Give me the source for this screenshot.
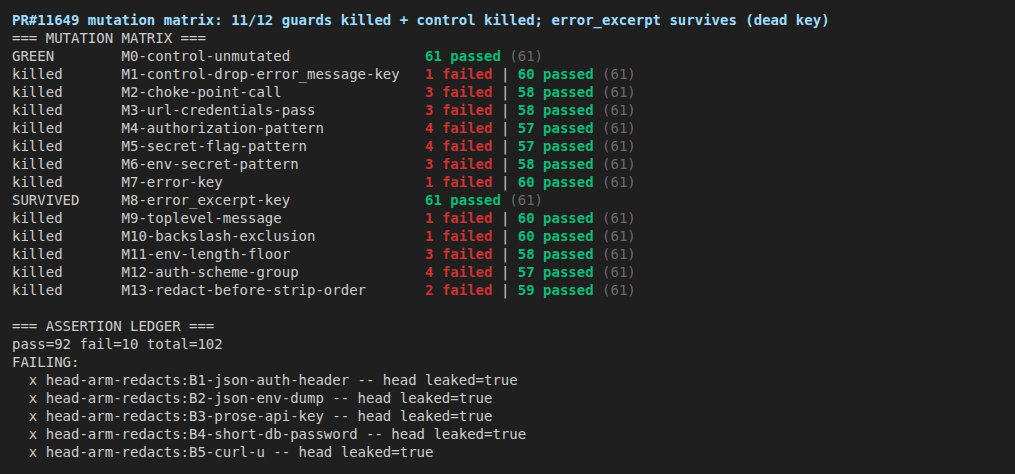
import React from "react";

const rows = [
  ["GREEN", "M0-control-unmutated", 0, 61],
  ["killed", "M1-control-drop-error_message-key", 1, 60],
  ["killed", "M2-choke-point-call", 3, 58],
  ["killed", "M3-url-credentials-pass", 3, 58],
  ["killed", "M4-authorization-pattern", 4, 57],
  ["killed", "M5-secret-flag-pattern", 4, 57],
  ["killed", "M6-env-secret-pattern", 3, 58],
  ["killed", "M7-error-key", 1, 60],
  ["SURVIVED", "M8-error_excerpt-key", 0, 61],
  ["killed", "M9-toplevel-message", 1, 60],
  ["killed", "M10-backslash-exclusion", 1, 60],
  ["killed", "M11-env-length-floor", 3, 58],
  ["killed", "M12-auth-scheme-group", 4, 57],
  ["killed", "M13-redact-before-strip-order", 2, 59],
];

const failing = [
  "B1-json-auth-header",
  "B2-json-env-dump",
  "B3-prose-api-key",
  "B4-short-db-password",
  "B5-curl-u",
];

export default function App() {
  return (
    <div className="w-[1015px] h-[474px] bg-[#1f1f1f] text-[#cccccc] overflow-hidden">
      <pre
        className="px-[12px] pt-[11px] text-[14px] leading-[18px] whitespace-pre"
        style={{ fontFamily: '"DejaVu Sans Mono", "Liberation Mono", monospace' }}
      >
        <div className="font-bold text-[#9cdcfe]">
          PR#11649 mutation matrix: 11/12 guards killed + control killed; error_excerpt survives (dead key)
        </div>
        <div>=== MUTATION MATRIX ===</div>
        {rows.map(([status, name, failed, passed]) => (
          <div key={name}>
            {status.padEnd(13, " ")}
            {name.padEnd(36, " ")}
            {failed > 0 && (
              <>
                <span className="font-bold text-[#cd3131]">{failed} failed</span>
                <span> | </span>
              </>
            )}
            <span className="font-bold text-[#0dbc79]">{passed} passed</span>
            <span className="text-[#6b6b6b]"> (61)</span>
          </div>
        ))}
        <div>{" "}</div>
        <div>=== ASSERTION LEDGER ===</div>
        <div>pass=92 fail=10 total=102</div>
        <div>FAILING:</div>
        {failing.map((f) => (
          <div key={f}>{`  x head-arm-redacts:${f} -- head leaked=true`}</div>
        ))}
      </pre>
    </div>
  );
}
